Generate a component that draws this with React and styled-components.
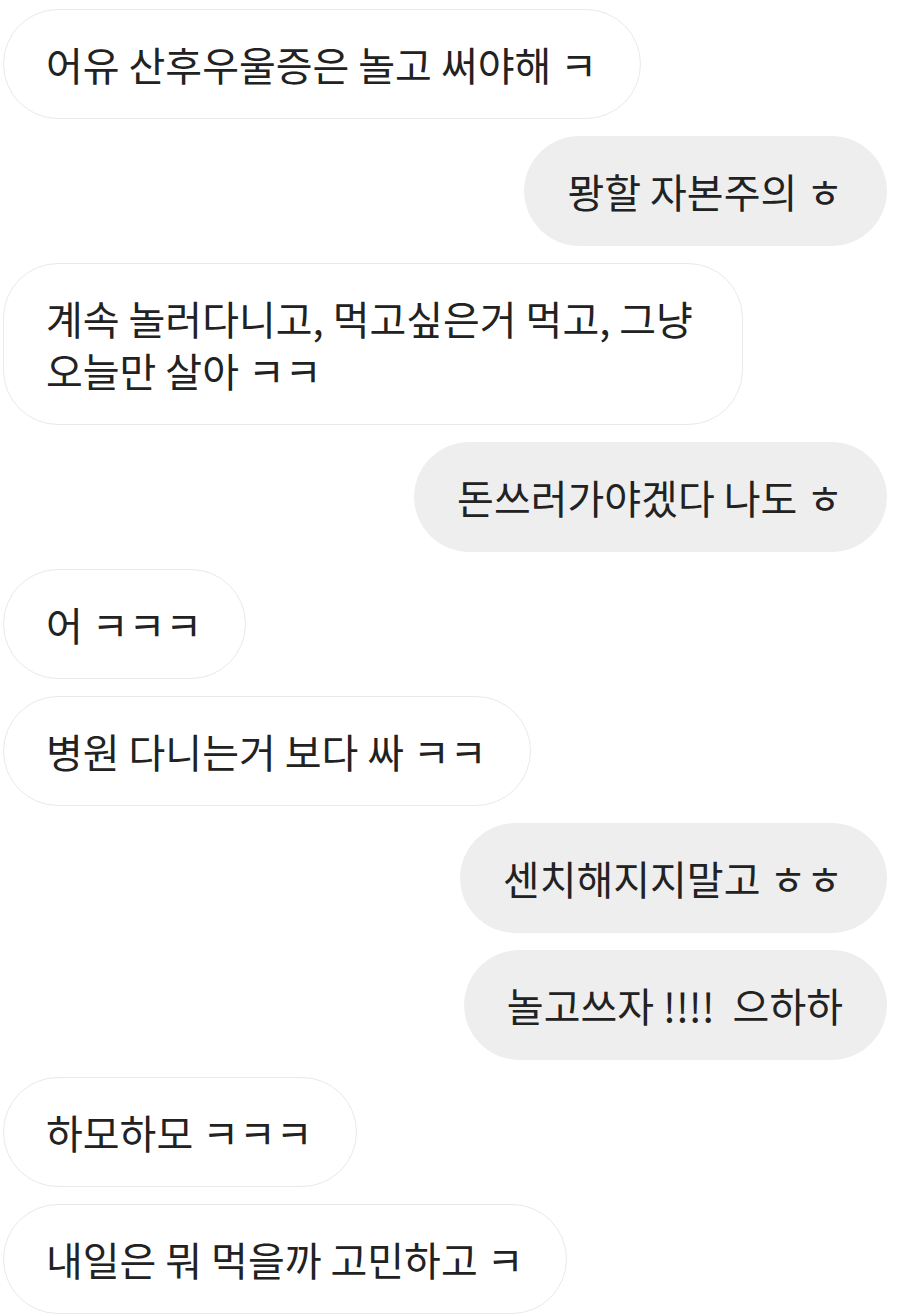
import React from 'react'
import styled, { createGlobalStyle } from 'styled-components'

const GlobalStyle = createGlobalStyle`
  body {
    margin: 0;
    background: #ffffff;
    font-family: "Noto Sans CJK KR", "Noto Sans", sans-serif;
  }
`

const Thread = styled.div`
  display: flex;
  flex-direction: column;
  gap: 17px;
  padding: 9px 37px 0 3px;
`

const Row = styled.div`
  display: flex;
  justify-content: ${props => (props.mine ? 'flex-end' : 'flex-start')};
`

const Bubble = styled.div`
  box-sizing: border-box;
  width: fit-content;
  max-width: 740px;
  padding: 28px 43px 28px 42px;
  border-radius: 55px;
  border: 1px solid ${props => (props.mine ? '#eeeeee' : '#e9e9e9')};
  background: ${props => (props.mine ? '#eeeeee' : '#ffffff')};
  color: #222222;
  font-size: 40px;
  line-height: 52px;
  white-space: pre-wrap;
`

const messages = [
  { id: 1, mine: false, text: '어유 산후우울증은 놀고 써야해 ㅋ' },
  { id: 2, mine: true, text: '뫙할 자본주의 ㅎ' },
  { id: 3, mine: false, text: '계속 놀러다니고, 먹고싶은거 먹고, 그냥 오늘만 살아 ㅋㅋ' },
  { id: 4, mine: true, text: '돈쓰러가야겠다 나도 ㅎ' },
  { id: 5, mine: false, text: '어 ㅋㅋㅋ' },
  { id: 6, mine: false, text: '병원 다니는거 보다 싸 ㅋㅋ' },
  { id: 7, mine: true, text: '센치해지지말고 ㅎㅎ' },
  { id: 8, mine: true, text: '놀고쓰자 !!!!  으하하' },
  { id: 9, mine: false, text: '하모하모 ㅋㅋㅋ' },
  { id: 10, mine: false, text: '내일은 뭐 먹을까 고민하고 ㅋ' },
]

function App() {
  return (
    <>
      <GlobalStyle />
      <Thread>
        {messages.map(msg =>
          <Row key={msg.id} mine={msg.mine}>
            <Bubble mine={msg.mine}>{msg.text}</Bubble>
          </Row>
        )}
      </Thread>
    </>
  )
}

export default App
